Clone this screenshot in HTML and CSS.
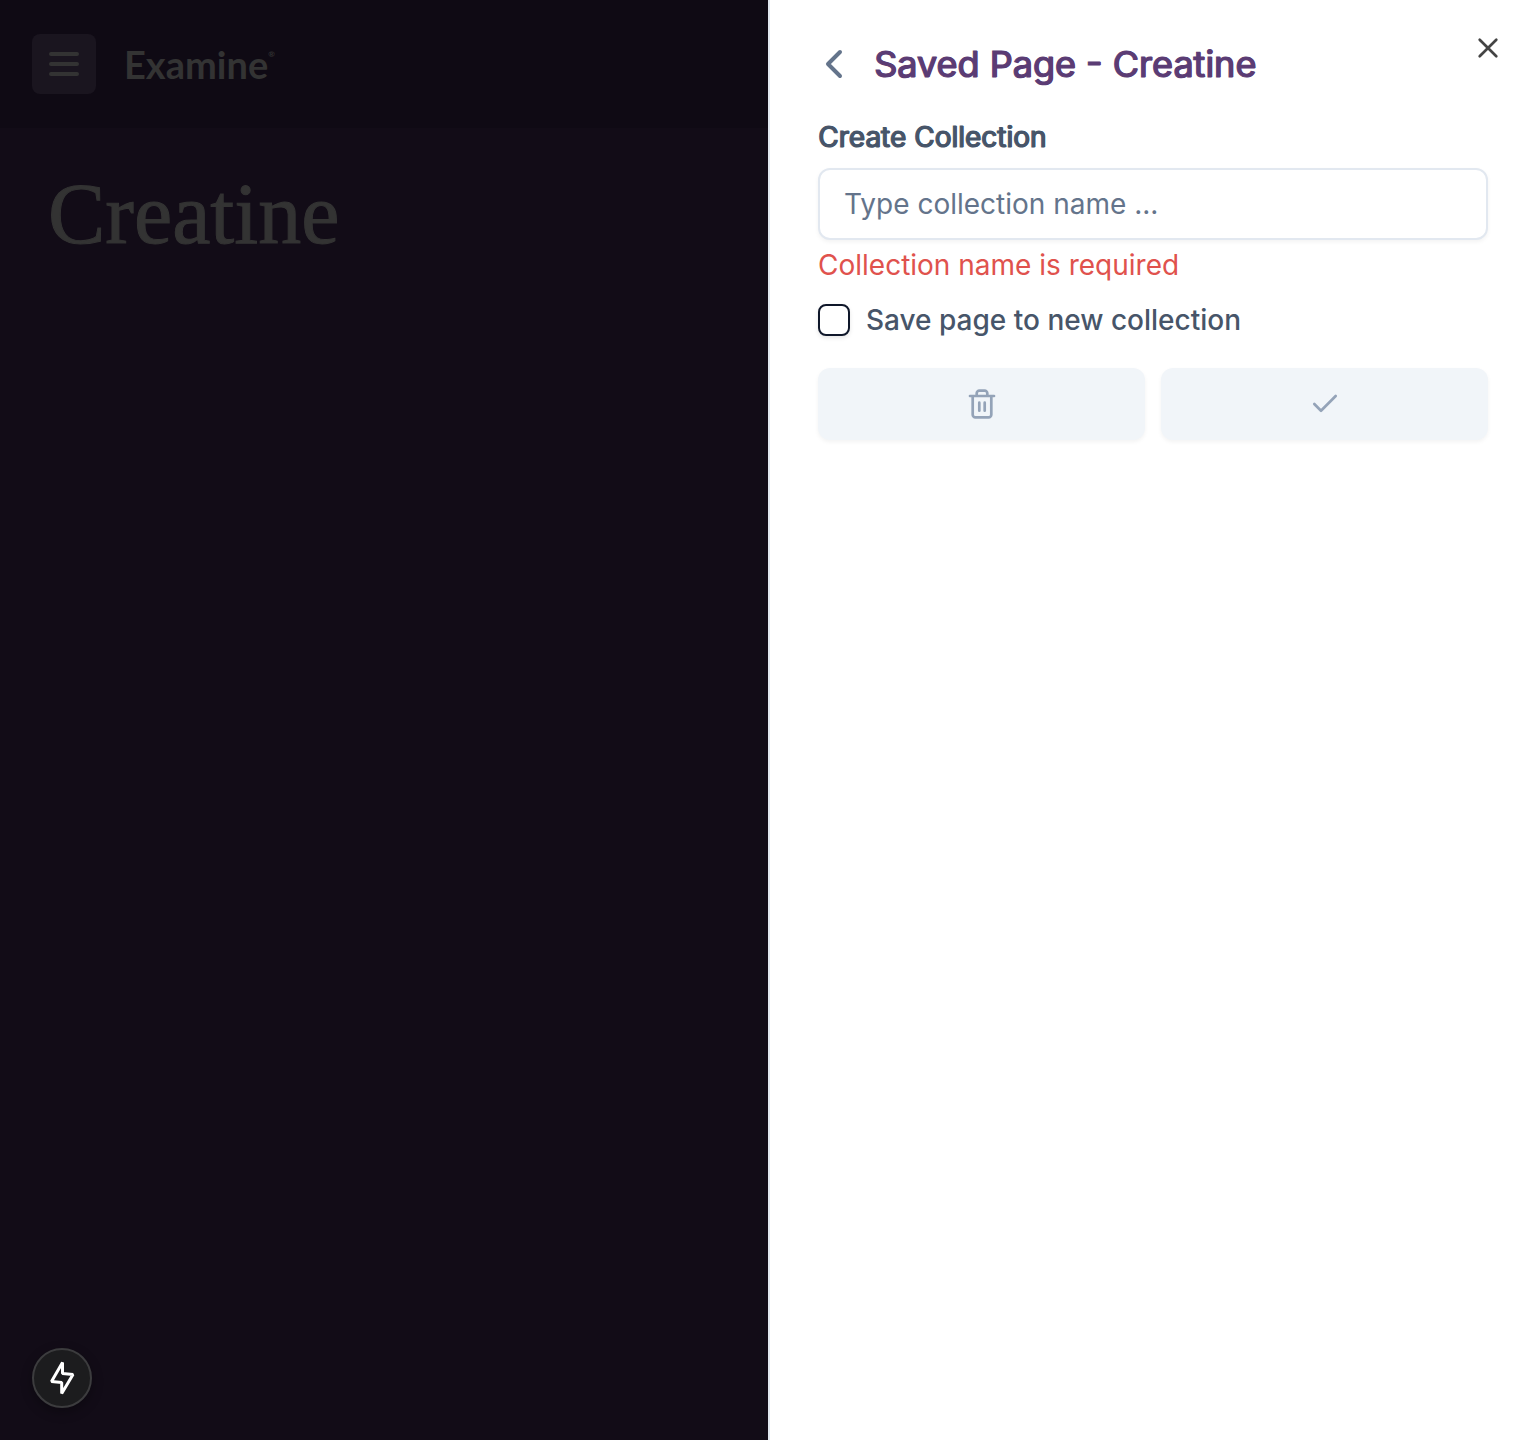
FILE: index.html
```html
<!DOCTYPE html>
<html lang="en">
<head>
<meta charset="utf-8">
<meta name="viewport" content="width=device-width, initial-scale=1">
<title>Creatine - Examine</title>
<link rel="stylesheet" href="styles.css">
</head>
<body>
<div class="page">
  <header class="site-header">
    <button class="menu-button" type="button" aria-label="Open menu">
      <svg width="32" height="32" viewBox="0 0 32 32" fill="none" stroke="currentColor" stroke-width="4" stroke-linecap="round"><path d="M3 6h26M3 16h26M3 26h26"/></svg>
    </button>
    <a class="logo" href="#">Examine<sup class="logo-mark">®</sup></a>
  </header>
  <main class="article">
    <h1 class="article-title">Creatine</h1>
  </main>
  <button class="quick-button" type="button" aria-label="Quick actions">
    <svg width="40" height="40" viewBox="0 0 40 40" fill="none" stroke="currentColor" stroke-width="3" stroke-linejoin="bevel"><path d="M20.500 4.500L9.500 23.500L19.700 24.500V35.500L31 16.500L20.500 15.500Z"/></svg>
  </button>
</div>
<aside class="drawer" role="dialog" aria-labelledby="drawer-title">
  <button class="close-button" type="button" aria-label="Close">
    <svg width="32" height="32" viewBox="0 0 32 32" fill="none" stroke="currentColor" stroke-width="2.700" stroke-linecap="round"><path d="M7.700 7.700l16.600 16.600M24.300 7.700l-16.600 16.600"/></svg>
  </button>
  <div class="drawer-head">
    <button class="back-button" type="button" aria-label="Back">
      <svg width="32" height="32" viewBox="0 0 32 32" fill="none" stroke="currentColor" stroke-width="4" stroke-linecap="round" stroke-linejoin="round"><path d="M22 4L10 16l12 12"/></svg>
    </button>
    <h2 class="drawer-title" id="drawer-title">Saved Page - Creatine</h2>
  </div>
  <form class="collection-form">
    <label class="field-label" for="collection-name">Create Collection</label>
    <input class="field-input" id="collection-name" type="text" placeholder="Type collection name ..." aria-describedby="name-error">
    <p class="field-error" id="name-error">Collection name is required</p>
    <div class="check-row">
      <input class="check-box" id="save-page" type="checkbox">
      <label class="check-label" for="save-page">Save page to new collection</label>
    </div>
    <div class="actions">
      <button class="action-button" type="button" aria-label="Discard" disabled>
        <svg width="32" height="32" viewBox="0 0 32 32" fill="none" stroke="currentColor" stroke-width="2.700" stroke-linecap="round" stroke-linejoin="round"><path d="M4 8h24M6.700 8v18.700c0 1.300 1.300 2.600 2.600 2.600h13.400c1.300 0 2.600-1.300 2.600-2.600V8M10.700 8V5.300c0-1.300 1.300-2.600 2.600-2.600h5.400c1.300 0 2.600 1.300 2.600 2.600V8M13.300 14.700v8M18.700 14.700v8"/></svg>
      </button>
      <button class="action-button" type="button" aria-label="Save" disabled>
        <svg width="32" height="32" viewBox="0 0 32 32" fill="none" stroke="currentColor" stroke-width="2.700" stroke-linecap="round" stroke-linejoin="round"><path d="M26.700 8L12 22.700l-6.700-6.700"/></svg>
      </button>
    </div>
  </form>
</aside>
</body>
</html>
```

FILE: styles.css
```css
* {
  box-sizing: border-box;
}

body {
  margin: 0;
  min-height: 100vh;
  display: grid;
  grid-template-columns: 1fr 1fr;
  background: #120c17;
  font-family: Inter, "Liberation Sans", sans-serif;
}

button {
  display: flex;
  align-items: center;
  justify-content: center;
  padding: 0;
  border: 0;
  background: none;
  font: inherit;
}

svg {
  flex: none;
}

.page {
  display: flex;
  flex-direction: column;
  align-items: stretch;
  color: #333333;
}

.site-header {
  display: flex;
  align-items: center;
  gap: 28px;
  height: 128px;
  padding: 0 32px;
  background: #0f0a14;
}

.menu-button {
  width: 64px;
  height: 60px;
  border-radius: 8px;
  background: #1a151f;
  color: #333333;
}

.logo {
  display: flex;
  align-items: flex-start;
  color: #333333;
  font-family: Lato, sans-serif;
  font-size: 38px;
  font-weight: 700;
  line-height: 48px;
  text-decoration: none;
}

.logo-mark {
  font-size: 8px;
  line-height: 28px;
}

.article {
  flex: 1;
  padding: 40px 48px;
}

.article-title {
  margin: 0;
  font-family: "Liberation Serif", serif;
  font-size: 86px;
  font-weight: 400;
  line-height: 92px;
  -webkit-text-stroke: 1px #333333;
}

.quick-button {
  width: 60px;
  height: 60px;
  margin: 0 32px 32px;
  border: 2px solid #3c3c3e;
  border-radius: 50%;
  background: #1c1c1e;
  color: #ffffff;
  box-shadow: 0 4px 12px rgba(0, 0, 0, 0.3);
}

.drawer {
  position: relative;
  padding: 32px 48px;
  border-left: 2px solid #e2e8f0;
  background: #ffffff;
  color: #475569;
}

.close-button {
  position: absolute;
  top: 32px;
  right: 32px;
  width: 32px;
  height: 32px;
  color: #444444;
}

.drawer-head {
  display: flex;
  align-items: center;
  gap: 24px;
  height: 64px;
}

.back-button {
  color: #64748b;
}

.drawer-title {
  margin: 0;
  color: #5b3c74;
  font-size: 36px;
  font-weight: 400;
  line-height: 40px;
  -webkit-text-stroke: 1px #5b3c74;
  text-shadow: 1px 0 #5b3c74;
}

.collection-form {
  display: flex;
  flex-direction: column;
  padding-top: 20px;
}

.field-label {
  font-size: 28px;
  line-height: 42px;
  -webkit-text-stroke: 1px #475569;
  text-shadow: 1px 0 #475569;
}

.field-input {
  width: 100%;
  height: 72px;
  margin-top: 10px;
  padding: 0 24px;
  border: 2px solid #e2e8f0;
  border-radius: 12px;
  background: #ffffff;
  color: #475569;
  font: 400 28px/40px Inter, "Liberation Sans", sans-serif;
  box-shadow: 0 2px 4px rgba(0, 0, 0, 0.05);
}

.field-input::placeholder {
  color: #64748b;
  opacity: 1;
}

.field-error {
  margin: 5px 0 0;
  color: #e0524d;
  font-size: 28px;
  line-height: 40px;
}

.check-row {
  display: flex;
  align-items: center;
  gap: 16px;
  margin-top: 15px;
}

.check-box {
  appearance: none;
  width: 32px;
  height: 32px;
  margin: 0;
  border: 2px solid #0f172a;
  border-radius: 8px;
  background: #ffffff;
  box-shadow: 0 2px 4px rgba(0, 0, 0, 0.1);
}

.check-label {
  font-size: 28px;
  font-weight: 500;
  line-height: 40px;
}

.actions {
  display: grid;
  grid-template-columns: 1fr 1fr;
  gap: 16px;
  margin-top: 28px;
}

.action-button {
  height: 72px;
  border-radius: 12px;
  background: #f1f5f9;
  color: #94a3b8;
  box-shadow: 0 2px 4px rgba(0, 0, 0, 0.05);
}
```
